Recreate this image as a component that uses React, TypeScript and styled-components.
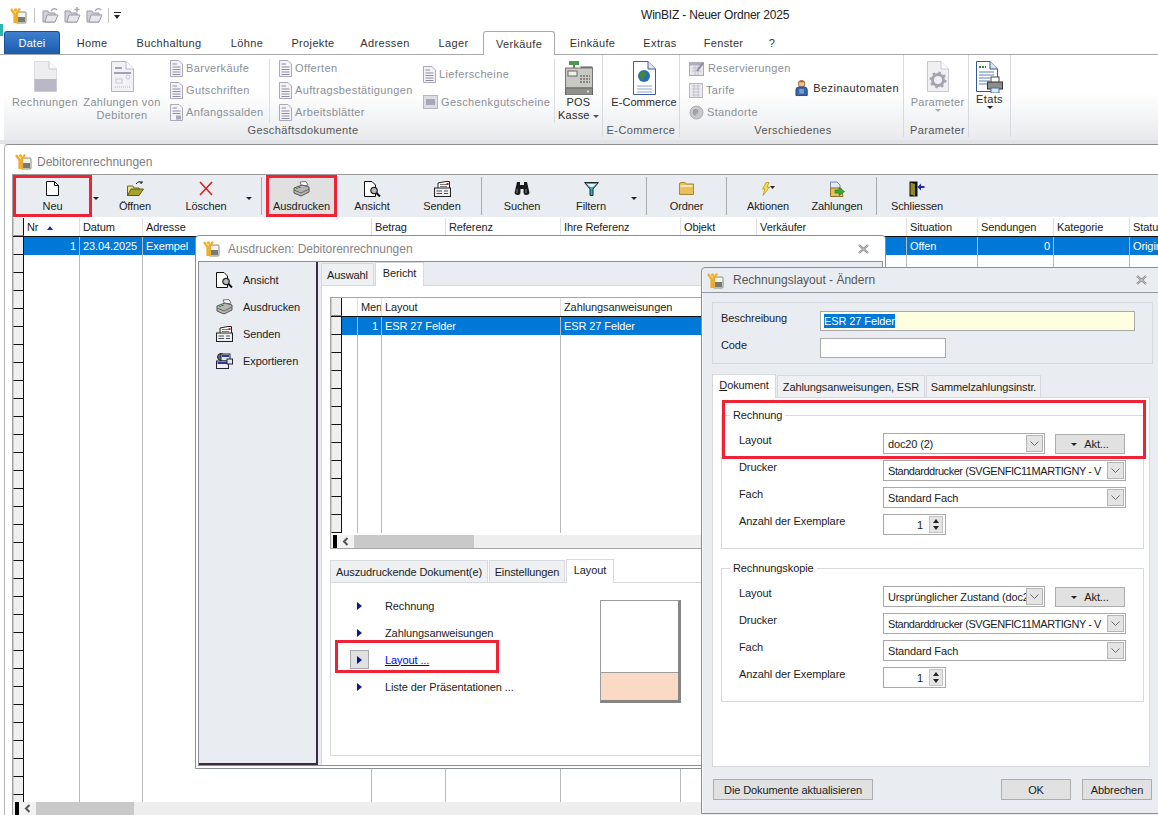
import React, {FC} from "react";
import styled, {createGlobalStyle} from "styled-components";

const GlobalStyle = createGlobalStyle`
  html, body {
    margin: 0;
    padding: 0;
    overflow: hidden;
    background: white;
  }
  * {
    box-sizing: border-box;
  }
`

/* ---------- icons ---------- */

const Logo: FC = () => (
    <svg width="17" height="17" viewBox="0 0 17 17">
        <rect x="6" y="5" width="10" height="11" rx="1" fill="#f4f4f0" stroke="#8a8a70"/>
        <rect x="7" y="10" width="8" height="5" fill="#77787a"/>
        <path d="M1 2 L4.5 7 L4.5 15 L7 15 L7 6 L10 1.5" fill="none" stroke="#f2ac1e" strokeWidth="2.2"/>
        <circle cx="5.5" cy="3" r="1.8" fill="#f5b52c"/>
    </svg>
);

const QuickFolder: FC<{ plus?: boolean }> = ({plus}) => (
    <svg width="17" height="16" viewBox="0 0 17 16">
        <path d="M1 4 H6 L7 6 H13 V15 H1 Z" fill="#d2d0d8" stroke="#9a98a8"/>
        <path d="M3 15 L5 8 H16 L13 15 Z" fill="#e8e7ec" stroke="#9a98a8"/>
        {plus ? <path d="M13 0 V5 M10.5 2.5 H15.5" stroke="#a8a6b4" strokeWidth="1.5"/>
            : <path d="M9 4 Q12 0 15 3" fill="none" stroke="#a8a6b4" strokeWidth="1.3"/>}
    </svg>
);

const BigPage: FC = () => (
    <svg width="23" height="31" viewBox="0 0 23 31">
        <path d="M0.5 0.5 H15 L22.5 8 V30.5 H0.5 Z" fill="#eeeeef" stroke="#dcdce2"/>
        <path d="M15 0.5 V8 H22.5" fill="#fafafa" stroke="#c8c8d0"/>
        <rect x="0.5" y="18" width="22" height="12.5" fill="#bab8c6"/>
    </svg>
);

const BigSlip: FC = () => (
    <svg width="23" height="31" viewBox="0 0 23 31">
        <path d="M0.5 0.5 H15 L22.5 8 V30.5 H0.5 Z" fill="#f2f1f5" stroke="#b4b2c4"/>
        <path d="M15 0.5 V8 H22.5" fill="#fff" stroke="#b4b2c4"/>
        <path d="M4 7 H11 M3 12 H20" stroke="#a3a1b3" strokeWidth="2"/>
        <rect x="5" y="18" width="6" height="4" fill="none" stroke="#c9c7d4"/>
        <circle cx="17" cy="16" r="2" fill="none" stroke="#c9c7d4"/>
        <path d="M4 26 H19" stroke="#b4b2c4" strokeDasharray="1 1"/>
    </svg>
);

const SmallDoc: FC<{ kind?: string }> = ({kind}) => (
    <svg width="13" height="17" viewBox="0 0 13 17">
        <path d="M0.5 0.5 H9 L12.5 4 V16.5 H0.5 Z" fill="#f3f3f6" stroke="#aaa8ba"/>
        <path d="M2.5 4 H7 M2.5 7 H10.5 M2.5 9.5 H10.5" stroke="#8e8ca0"/>
        {kind === "s" ? <rect x="6" y="11.5" width="5" height="4" fill="#aaa8ba"/> : <path d="M2.5 12 H10.5 M2.5 14.5 H10.5" stroke="#8e8ca0"/>}
    </svg>
);

const VoucherIcon: FC = () => (
    <svg width="15" height="14" viewBox="0 0 15 14">
        <rect x="0.5" y="0.5" width="14" height="13" fill="#dddde4" stroke="#b6b4c4"/>
        <rect x="3" y="4" width="9" height="6" fill="#a8a7b8"/>
    </svg>
);

const CashRegister: FC = () => (
    <svg width="28" height="34" viewBox="0 0 28 34">
        <rect x="4" y="0" width="10" height="4" fill="#4a9a4a"/>
        <rect x="8" y="4" width="2" height="3" fill="#777"/>
        <rect x="16" y="6" width="11" height="5" fill="#4ca84c" stroke="#555"/>
        <rect x="0.5" y="7" width="27" height="20" fill="#c9c9c3" stroke="#777"/>
        <rect x="3" y="10" width="9" height="5" fill="#f0f0ec" stroke="#666"/>
        <path d="M15 15 H25 M15 18 H25 M15 21 H25" stroke="#444" strokeDasharray="2 1"/>
        <rect x="0.5" y="27" width="27" height="7" fill="#8f8f8c" stroke="#666"/>
        <circle cx="23" cy="30.5" r="1" fill="#eee"/>
    </svg>
);

const GlobeDoc: FC = () => (
    <svg width="23" height="34" viewBox="0 0 23 34">
        <path d="M0.5 0.5 H15 L22.5 8 V33.5 H0.5 Z" fill="#fff" stroke="#3d5f9e"/>
        <path d="M15 0.5 V8 H22.5" fill="#dfe8f4" stroke="#3d5f9e"/>
        <circle cx="11" cy="15" r="6" fill="#2a6cb8"/>
        <path d="M7 12 Q10 9 13 12 Q14 15 11 16 Q11 20 9 19 Q6 16 7 12 Z" fill="#3e8a3a"/>
        <path d="M4 25 H19 M4 28 H19 M4 31 H19" stroke="#8ea4c9"/>
    </svg>
);

const ReservIcon: FC = () => (
    <svg width="16" height="16" viewBox="0 0 16 16">
        <rect x="0.5" y="2.5" width="14" height="13" fill="#e8e8ec" stroke="#aaa8b8"/>
        <rect x="0.5" y="2.5" width="14" height="3" fill="#b0aebc"/>
        <path d="M3 8 H12 M3 11 H12 M6 6 V15 M9 6 V15" stroke="#c0bece"/>
        <path d="M8 11 L14 3" stroke="#8e8c9c" strokeWidth="2"/>
    </svg>
);

const TarifIcon: FC = () => (
    <svg width="14" height="15" viewBox="0 0 14 15">
        <rect x="0.5" y="0.5" width="13" height="14" fill="#ececf0" stroke="#b8b6c4"/>
        <path d="M3 3 H11 M3 6 H11 M3 9 H11 M3 12 H11 M5 1 V14 M9 1 V14" stroke="#c2c0ce"/>
    </svg>
);

const GreyGlobe: FC = () => (
    <svg width="15" height="15" viewBox="0 0 15 15">
        <circle cx="7.5" cy="7.5" r="6.5" fill="#c8c8cc" stroke="#b0b0b6"/>
        <path d="M4 5 Q7 3 9 5 Q10 8 7 9 Q6 12 5 10 Q3 8 4 5Z" fill="#a0a0a8"/>
    </svg>
);

const PumpMan: FC = () => (
    <svg width="14" height="18" viewBox="0 0 14 18">
        <circle cx="7" cy="4.5" r="3.5" fill="#f0c090" stroke="#a06830"/>
        <path d="M3.5 3 Q7 -1 10.5 3 Z" fill="#a86420"/>
        <path d="M1 17 V11 Q1 8 4 8 H10 Q13 8 13 11 V17 Z" fill="#3a62a8" stroke="#2a4880"/>
        <rect x="4.5" y="10" width="5" height="5" fill="#7a9ad0"/>
    </svg>
);

const GearDoc: FC = () => (
    <svg width="22" height="31" viewBox="0 0 22 31">
        <path d="M0.5 0.5 H14 L21.5 8 V30.5 H0.5 Z" fill="#f0f0f3" stroke="#c8c8d2"/>
        <path d="M14 0.5 V8 H21.5" fill="#fff" stroke="#c8c8d2"/>
        <circle cx="11" cy="19" r="5.5" fill="none" stroke="#a4a3b0" strokeWidth="3"/>
        <circle cx="11" cy="19" r="7.5" fill="none" stroke="#a4a3b0" strokeWidth="2" strokeDasharray="2.5 3.4"/>
    </svg>
);

const EtatsIcon: FC = () => (
    <svg width="27" height="32" viewBox="0 0 27 32">
        <path d="M0.5 0.5 H14 L21.5 8 V30.5 H0.5 Z" fill="#fff" stroke="#345a94"/>
        <path d="M14 0.5 V8 H21.5" fill="#d8e4f2" stroke="#345a94"/>
        <path d="M3 6 H10" stroke="#2b8a3a" strokeWidth="2" strokeDasharray="2 1"/>
        <path d="M3 11 H18 M3 14 H18 M3 17 H14 M3 20 H14 M3 23 H14" stroke="#5c7fb4"/>
        <rect x="15" y="16" width="8" height="6" fill="#fff" stroke="#444"/>
        <rect x="11.5" y="21" width="15" height="7" fill="#8d8d8d" stroke="#333"/>
        <rect x="15" y="27" width="8" height="5" fill="#dfeaf6" stroke="#3c6ea8"/>
    </svg>
);

const NewDoc: FC = () => (
    <svg width="13" height="15" viewBox="0 0 13 15">
        <path d="M0.5 0.5 H8.5 L12.5 4.5 V14.5 H0.5 Z" fill="#fff" stroke="#111"/>
        <path d="M8.5 0.5 V4.5 H12.5" fill="none" stroke="#111"/>
    </svg>
);

const OpenFolder: FC = () => (
    <svg width="17" height="15" viewBox="0 0 17 15">
        <path d="M9 3 Q12 -1 15 2 M15 2 L15 0 M15 2 L13 2" fill="none" stroke="#111"/>
        <path d="M0.5 5 H6 L7 7 H12 V14.5 H0.5 Z" fill="#efe28a" stroke="#6a6420"/>
        <path d="M0.5 14.5 L4 8 H16.5 L12 14.5 Z" fill="#a9a02e" stroke="#5c5618"/>
    </svg>
);

const RedCross: FC = () => (
    <svg width="14" height="15" viewBox="0 0 14 15">
        <path d="M1 1 L13 14 M13 1 L1 14" stroke="#d8201c" strokeWidth="1.6"/>
    </svg>
);

const PrinterIcon: FC = () => (
    <svg width="17" height="16" viewBox="0 0 17 16">
        <path d="M7 1 L13 0.5 L15 4 L9 6 Z" fill="#fafafa" stroke="#777"/>
        <path d="M1 7 L9 4 L16 6 V11 L8 15 L1 12 Z" fill="#b5b5b5" stroke="#555"/>
        <path d="M1 9 L8 12 L16 8" fill="none" stroke="#666"/>
        <rect x="3" y="7" width="2" height="1" fill="#29a329"/>
        <rect x="5.5" y="6" width="2" height="1" fill="#d02020"/>
    </svg>
);

const PreviewIcon: FC = () => (
    <svg width="17" height="16" viewBox="0 0 17 16">
        <path d="M0.5 0.5 H8 L11.5 4 V15.5 H0.5 Z" fill="#fff" stroke="#111"/>
        <circle cx="10" cy="9.5" r="3.2" fill="#bcbcbc" stroke="#222" strokeWidth="1.2"/>
        <path d="M12.5 12 L16 15.5" stroke="#111" strokeWidth="2"/>
    </svg>
);

const SendIcon: FC = () => (
    <svg width="17" height="16" viewBox="0 0 17 16">
        <path d="M4 7 V2 L12 0.5 H15.5 V8" fill="#fff" stroke="#222"/>
        <path d="M6 3.5 H13 M6 5.5 H13" stroke="#777"/>
        <rect x="12.5" y="2" width="2" height="2" fill="#c02020"/>
        <rect x="0.5" y="7" width="16" height="8.5" fill="#eee" stroke="#222"/>
        <path d="M2.5 10 H8 M2.5 12.5 H8 M10 10 H14 M10 12.5 H14" stroke="#456" strokeWidth="1.2"/>
    </svg>
);

const ExportIcon: FC = () => (
    <svg width="17" height="16" viewBox="0 0 17 16">
        <circle cx="5" cy="4" r="3.5" fill="#667" stroke="#222"/>
        <rect x="5" y="1" width="9" height="7" fill="#dfe6f4" stroke="#223"/>
        <rect x="6" y="2" width="7" height="2" fill="#2c3c9c"/>
        <rect x="0.5" y="8" width="12" height="7.5" fill="#eef" stroke="#223"/>
        <rect x="1.5" y="9" width="10" height="2" fill="#2c3c9c"/>
        <rect x="11" y="6" width="5.5" height="5" fill="#dfe6f4" stroke="#223"/>
    </svg>
);

const Binoculars: FC = () => (
    <svg width="16" height="15" viewBox="0 0 16 15">
        <path d="M3 1 H6 V4 H10 V1 H13 L15.5 12 Q15 14 12 14 Q9.5 14 9.5 11 V8 H6.5 V11 Q6.5 14 4 14 Q1 14 0.5 12 Z" fill="#1a1a1a"/>
        <path d="M3 8 V12 M12 8 V12" stroke="#888"/>
    </svg>
);

const Funnel: FC = () => (
    <svg width="15" height="14" viewBox="0 0 15 14">
        <path d="M0.5 0.5 H14.5 L9 7 V13.5 H6 V7 Z" fill="#3ea8a8" stroke="#1c2c34"/>
        <path d="M3 2 H12 L9 5 H6 Z" fill="#e9f6f6"/>
    </svg>
);

const YellowFolder: FC = () => (
    <svg width="15" height="13" viewBox="0 0 15 13">
        <path d="M0.5 2 Q0.5 0.5 2 0.5 H6 L7 2 H14.5 V12.5 H0.5 Z" fill="#e9bf5e" stroke="#a68a3c"/>
        <rect x="1.5" y="3" width="12" height="2" fill="#f7e4ae"/>
    </svg>
);

const Lightning: FC = () => (
    <svg width="16" height="14" viewBox="0 0 16 14">
        <path d="M6 0.5 H9 L7 5 H9.5 L3 13.5 L5 7 H2.5 Z" fill="#f4e04c" stroke="#a88c18" strokeWidth="0.7"/>
        <path d="M10 4 H15 L12.5 7 Z" fill="#222"/>
    </svg>
);

const PayIcon: FC = () => (
    <svg width="15" height="16" viewBox="0 0 15 16">
        <path d="M0.5 1 H7 L10 4 V14.5 H0.5 Z" fill="#dfe8f6" stroke="#7a8ca8"/>
        <path d="M0.5 7 H11 L13 15.5 H0.5 Z" fill="#e9c254" stroke="#8c7228"/>
        <path d="M5 9 H9 V6.5 L14.5 10.5 L9 14.5 V12 H5 Z" fill="#38a838" stroke="#1e6e1e" strokeWidth="0.6"/>
    </svg>
);

const DoorIcon: FC = () => (
    <svg width="16" height="16" viewBox="0 0 16 16">
        <rect x="0.5" y="0.5" width="8" height="15" fill="#111"/>
        <path d="M1.5 1.5 L6 3 V15 L1.5 13.5 Z" fill="#8f8a26"/>
        <path d="M15.5 5 H12 V2.5 L8.5 6 L12 9.5 V7 H15.5 Z" fill="#1c2ea0"/>
    </svg>
);

const Chevron: FC = () => (
    <svg width="9" height="5" viewBox="0 0 9 5">
        <path d="M0.5 0.5 L4.5 4.5 L8.5 0.5" fill="none" stroke="#6a6a6a"/>
    </svg>
);

const ScrollLeft: FC = () => (
    <svg width="7" height="9" viewBox="0 0 7 9">
        <path d="M5.5 1 L2 4.5 L5.5 8" fill="none" stroke="#555" strokeWidth="2"/>
    </svg>
);

const CloseX: FC = () => (
    <svg width="11" height="10" viewBox="0 0 11 10">
        <path d="M1 1 L10 9 M10 1 L1 9" stroke="#7a7a7a" strokeWidth="2.2"/>
        <path d="M1 1 L10 9 M10 1 L1 9" stroke="#f2f2f2" strokeWidth="0.7"/>
    </svg>
);

/* ---------- frame ---------- */

const Page = styled.div`
  position: relative;
  width: 1158px;
  height: 815px;
  overflow: hidden;
  background: white;
  display: flex;
  flex-direction: column;
  font-family: "Liberation Sans", Arial, sans-serif;
  font-size: 11px;
  letter-spacing: -0.1px;
  color: #1c1c1c;
`

const EdgeMark = styled.div`
  position: absolute;
  left: 0;
  top: 24px;
  width: 3px;
  height: 12px;
  background: #2fb5b0;
`

const TopBar = styled.div`
  height: 30px;
  display: flex;
  align-items: center;
  flex-shrink: 0;
`

const QuickBar = styled.div`
  width: 641px;
  padding-left: 10px;
  display: flex;
  align-items: center;
  gap: 5px;
`

const QuickSep = styled.span<{ $gap: number }>`
  width: 1px;
  height: 15px;
  background: #c4c4c4;
  margin: 0 ${p => p.$gap}px;
`

const QuickDrop = styled.span`
  width: 7px;
  height: 7px;
  border-top: 1px solid #222;
  position: relative;
  &::after {
    content: "";
    position: absolute;
    left: 0;
    top: 2px;
    border: 3.5px solid transparent;
    border-top: 4px solid #222;
    border-bottom: none;
  }
`

const AppTitle = styled.div`
  font-size: 12px;
  letter-spacing: -0.2px;
  color: #222;
`

const TabRow = styled.div`
  height: 25px;
  padding: 1px 0 0 4px;
  display: flex;
  align-items: stretch;
  border-bottom: 1px solid #a9a9a9;
  flex-shrink: 0;
`

const FileTab = styled.div`
  width: 56px;
  height: 23px;
  background: linear-gradient(#3f7fce, #1c5cb0);
  border: 1px solid #1b4f96;
  border-bottom: none;
  border-radius: 3px 3px 0 0;
  color: white;
  display: flex;
  align-items: center;
  justify-content: center;
  letter-spacing: 0.3px;
`

const RibbonTab = styled.div<{ $w: number; $active?: boolean }>`
  width: ${p => p.$w}px;
  height: 24px;
  display: flex;
  align-items: center;
  justify-content: center;
  letter-spacing: 0.35px;
  color: #333;
  margin-bottom: -1px;
  ${p => p.$active && `
    background: white;
    border: 1px solid #a9a9a9;
    border-bottom: none;
    border-radius: 3px 3px 0 0;
  `}
`

const Ribbon = styled.div`
  height: 85px;
  margin-left: 4px;
  display: flex;
  background: linear-gradient(#ffffff 45%, #e8eaed);
  flex-shrink: 0;
`

const RibbonGroup = styled.div<{ $w: number }>`
  width: ${p => p.$w}px;
  height: 82px;
  border-right: 1px solid #d6d9dd;
  display: flex;
  flex-direction: column;
`

const GroupBody = styled.div`
  height: 70px;
  display: flex;
`

const GroupLabel = styled.div<{ $pl?: number }>`
  height: 14px;
  line-height: 14px;
  padding-left: ${p => p.$pl || 0}px;
  text-align: center;
  color: #555;
  letter-spacing: 0.4px;
`

const BigButton = styled.div<{ $w: number; $muted?: boolean; $ml?: number; $ls?: number }>`
  width: ${p => p.$w}px;
  margin-left: ${p => p.$ml || 0}px;
  padding-top: 6px;
  display: flex;
  flex-direction: column;
  align-items: center;
  flex-shrink: 0;
  color: ${p => p.$muted ? "#8c8f96" : "#2b2b2b"};
  letter-spacing: ${p => p.$ls ?? 0.35}px;
  white-space: nowrap;
  text-align: center;
  line-height: 13px;
`

const BigIcon = styled.div<{ $mb?: number }>`
  height: 30px;
  margin-bottom: ${p => p.$mb ?? 5}px;
  display: flex;
  justify-content: center;
`

const DropMark = styled.span<{ $color?: string }>`
  display: inline-block;
  border: 3px solid transparent;
  border-top: 3px solid ${p => p.$color || "#222"};
  border-bottom: none;
  vertical-align: middle;
`

const SmallColumn = styled.div<{ $w: number; $ml: number; $pt?: number; $gap?: number }>`
  width: ${p => p.$w}px;
  margin-left: ${p => p.$ml}px;
  padding-top: ${p => p.$pt ?? 2}px;
  display: flex;
  flex-direction: column;
  gap: ${p => p.$gap || 0}px;
  flex-shrink: 0;
`

const SmallItem = styled.div<{ $dark?: boolean }>`
  height: 22px;
  display: flex;
  align-items: center;
  gap: ${p => p.$dark ? 5 : 3}px;
  color: ${p => p.$dark ? "#2b2b2b" : "#8c8f96"};
  letter-spacing: ${p => p.$dark ? 0.45 : 0.36}px;
  white-space: nowrap;
`

const RibbonSep = styled.div`
  width: 1px;
  height: 64px;
  margin-top: 4px;
  background: #dcdee2;
  flex-shrink: 0;
`

const RibbonFoot = styled.div`
  height: 4px;
  background: #e2e4e7;
  flex-shrink: 0;
`

const ChildWindow = styled.div`
  flex: 1;
  min-height: 0;
  margin-left: 4px;
  border-left: 1px solid #b4b4b4;
  border-top: 1px solid #8e8e8e;
  border-top-left-radius: 4px;
  display: flex;
  flex-direction: column;
`

const ChildTitle = styled.div`
  height: 29px;
  padding: 4px 0 0 10px;
  display: flex;
  align-items: center;
  gap: 5px;
  color: #7f7f7f;
  font-size: 12px;
  letter-spacing: 0;
  flex-shrink: 0;
`

const ChildBody = styled.div`
  flex: 1;
  min-height: 0;
  margin-left: 7px;
  border-left: 1px solid #a0a0a0;
  border-top: 1px solid #9b9b9b;
  display: flex;
  flex-direction: column;
`

/* ---------- toolbar ---------- */

const Toolbar = styled.div`
  height: 42px;
  background: #e9edf2;
  display: flex;
  flex-shrink: 0;
`

const ToolButton = styled.div<{ $w: number; $marked?: boolean; $pressed?: boolean }>`
  width: ${p => p.$w}px;
  display: flex;
  flex-direction: column;
  align-items: center;
  padding-top: 5px;
  flex-shrink: 0;
  background: ${p => p.$pressed ? "#e0e0e0" : "transparent"};
  ${p => p.$marked && `
    border: 3px solid #ee2436;
    padding-top: 2px;
  `}
`

const ToolIcon = styled.div`
  height: 17px;
  display: flex;
  align-items: center;
  margin-bottom: 3px;
`

const ToolArrow = styled.div<{ $w: number }>`
  width: ${p => p.$w}px;
  padding-top: 22px;
  display: flex;
  justify-content: center;
  flex-shrink: 0;
`

const ToolSep = styled.div<{ $l: number; $r: number }>`
  width: 1px;
  height: 38px;
  margin: 2px ${p => p.$r}px 0 ${p => p.$l}px;
  background: #a8aaad;
  flex-shrink: 0;
`

/* ---------- grids ---------- */

const GridWrap = styled.div`
  flex: 1;
  min-height: 0;
  padding-top: 1px;
  display: flex;
  flex-direction: column;
  background: white;
  overflow: hidden;
`

const GridRows = styled.div`
  flex: 1;
  min-height: 0;
  overflow: hidden;
`

const HeaderRow = styled.div`
  height: 19px;
  display: flex;
  border-bottom: 1px solid #111;
  flex-shrink: 0;
`

const Row = styled.div<{ $selected?: boolean }>`
  height: 18px;
  display: flex;
  color: ${p => p.$selected ? "white" : "inherit"};
`

const RowHead = styled.div<{ $top?: boolean }>`
  width: 11px;
  flex-shrink: 0;
  background: #efefef;
  border-right: 1px solid #111;
  border-bottom: 1px solid ${p => p.$top ? "#888" : "#111"};
  border-left: 1px solid #ccc;
`

const HeadCell = styled.div<{ $w: number }>`
  width: ${p => p.$w}px;
  flex-shrink: 0;
  padding-left: 3px;
  line-height: 18px;
  border-right: 1px solid #dfdfdf;
  white-space: nowrap;
  overflow: hidden;
`

const Cell = styled.div<{ $w: number; $selected?: boolean; $right?: boolean }>`
  width: ${p => p.$w}px;
  flex-shrink: 0;
  padding: 0 3px;
  line-height: 18px;
  border-right: 1px solid #b9b9b9;
  white-space: nowrap;
  overflow: hidden;
  text-align: ${p => p.$right ? "right" : "left"};
  background: ${p => p.$selected ? "#0078d7" : "transparent"};
`

const SortMark = styled.span`
  display: inline-block;
  margin-left: 9px;
  vertical-align: middle;
  border: 3px solid transparent;
  border-bottom: 4px solid #1c2e98;
  border-top: none;
`

const Scrollbar = styled.div`
  height: 13px;
  display: flex;
  background: #eeeeee;
  flex-shrink: 0;
`

const ScrollStub = styled.div`
  width: 4px;
  margin-left: 2px;
  background: #000;
`

const ScrollButton = styled.div`
  width: 17px;
  display: flex;
  align-items: center;
  justify-content: center;
  background: #f2f2f2;
`

const ScrollThumb = styled.div<{ $w: number }>`
  width: ${p => p.$w}px;
  background: #c9c9c9;
`

/* ---------- print dialog ---------- */

const PrintDialog = styled.div`
  position: absolute;
  left: 195px;
  top: 235px;
  width: 691px;
  height: 534px;
  background: white;
  border: 1px solid #8a8f96;
  border-radius: 4px 4px 0 0;
  padding: 0 2px 2px;
  display: flex;
  flex-direction: column;
`

const DialogTitle = styled.div`
  height: 25px;
  padding-left: 5px;
  display: flex;
  align-items: center;
  gap: 8px;
  color: #868686;
  font-size: 12px;
  letter-spacing: -0.03px;
  flex-shrink: 0;
`

const TitleClose = styled.span<{ $r: number }>`
  margin-left: auto;
  margin-right: ${p => p.$r}px;
  display: flex;
`

const PrintBody = styled.div`
  flex: 1;
  min-height: 0;
  display: flex;
  border: 1px solid #8a8f96;
  border-bottom-width: 1px;
  background: #e9edf2;
`

const SideMenu = styled.div`
  width: 119px;
  flex-shrink: 0;
  padding: 4px 0 0 17px;
  border-right: 2px solid #3b2a46;
  border-bottom: 2px solid #3b2a46;
  display: flex;
  flex-direction: column;
`

const SideItem = styled.div`
  height: 27px;
  display: flex;
  align-items: center;
  gap: 10px;
`

const PrintContent = styled.div`
  flex: 1;
  min-width: 0;
  padding-left: 3px;
  display: flex;
  flex-direction: column;
`

const TabStrip = styled.div`
  display: flex;
  align-items: flex-end;
  flex-shrink: 0;
  position: relative;
`

const TabItem = styled.div<{ $w: number; $active?: boolean }>`
  width: ${p => p.$w}px;
  height: ${p => p.$active ? 24 : 22}px;
  display: flex;
  align-items: center;
  justify-content: center;
  background: ${p => p.$active ? "white" : "#eef0f2"};
  border: 1px solid #d6d9dd;
  border-bottom: none;
  margin-right: 1px;
  margin-bottom: ${p => p.$active ? -1 : 0}px;
  padding-bottom: ${p => p.$active ? 3 : 0}px;
  z-index: ${p => p.$active ? 1 : 0};
  flex-shrink: 0;
`

const ReportPanel = styled.div`
  flex: 1;
  min-height: 0;
  background: white;
  border-top: 1px solid #d6d9dd;
  border-left: 1px solid #d6d9dd;
  padding: 11px 0 9px 8px;
  display: flex;
  flex-direction: column;
`

const ReportGrid = styled.div`
  height: 252px;
  flex-shrink: 0;
  border: 1px solid #a6a6a6;
  display: flex;
  flex-direction: column;
  overflow: hidden;
`

const LowerTabs = styled(TabStrip)`
  margin-top: 10px;
`

const LayoutPanel = styled.div`
  flex: 1;
  min-height: 0;
  border: 1px solid #d6d9dd;
  position: relative;
  padding: 9px 0 0 0;
  display: flex;
`

const ActionList = styled.div`
  width: 269px;
  flex-shrink: 0;
`

const ActionRow = styled.div`
  position: relative;
  height: 27px;
  display: flex;
  align-items: center;
  padding-left: 19px;
`

const ArrowCell = styled.div<{ $active?: boolean }>`
  width: 19px;
  height: 19px;
  display: flex;
  align-items: center;
  justify-content: center;
  margin-right: 16px;
  ${p => p.$active && `
    background: #e1e1e1;
    border: 1px solid #a8a8a8;
  `}
  &::after {
    content: "";
    border: 4px solid transparent;
    border-left: 5px solid #0a1a8a;
    border-right: none;
  }
`

const ActionLink = styled.span`
  color: #0000ee;
  text-decoration: underline;
`

const MarkBox = styled.div`
  position: absolute;
  border: 3px solid #ee2436;
  pointer-events: none;
`

const ActionMark = styled(MarkBox)`
  left: 4px;
  top: -6px;
  width: 164px;
  height: 33px;
`

const Preview = styled.div`
  width: 81px;
  height: 103px;
  margin-top: 8px;
  border-top: 1px solid #9c9c9c;
  border-left: 1px solid #9c9c9c;
  border-right: 3px solid #858585;
  border-bottom: 3px solid #858585;
  display: flex;
  flex-direction: column;
`

const PreviewBlank = styled.div`
  flex: 1;
  border-bottom: 1px solid #9c9c9c;
`

const PreviewFooter = styled.div`
  height: 27px;
  background: #fbd9c4;
`

/* ---------- layout dialog ---------- */

const LayoutDialog = styled.div`
  position: absolute;
  left: 701px;
  top: 267px;
  width: 470px;
  height: 547px;
  background: #e9edf2;
  border: 1px solid #8a8f96;
  border-radius: 4px 4px 0 0;
  box-shadow: inset 1px 0 0 #f7f7f7;
  display: flex;
  flex-direction: column;
`

const LayoutTitle = styled(DialogTitle)`
  color: #555;
  letter-spacing: 0;
  gap: 9px;
  border-bottom: 1px solid #93979d;
`

const LayoutBody = styled.div`
  padding: 9px 0 0 10px;
  width: 451px;
  display: flex;
  flex-direction: column;
`

const TopGroup = styled.div`
  height: 62px;
  width: 441px;
  padding: 8px;
  border: 1px solid #d5d9de;
  display: flex;
  flex-direction: column;
  gap: 7px;
  flex-shrink: 0;
`

const FieldRow = styled.div`
  display: flex;
  align-items: flex-start;
  line-height: 14px;
`

const TopLabel = styled.div`
  width: 99px;
  flex-shrink: 0;
`

const DescInput = styled.div`
  width: 315px;
  height: 20px;
  padding: 2px 3px;
  background: #ffffe1;
  border: 1px solid #a9a9a9;
  display: flex;
  align-items: center;
`

const Selected = styled.span`
  background: #0078d7;
  color: white;
  line-height: 14px;
`

const CodeInput = styled.div`
  width: 126px;
  height: 20px;
  background: white;
  border: 1px solid #a9a9a9;
`

const DocTabs = styled(TabStrip)`
  margin-top: 10px;
`

const DocPanel = styled.div`
  position: relative;
  width: 438px;
  height: 370px;
  background: white;
  border: 1px solid #d6d9dd;
  padding: 10px 5px 0 8px;
  flex-shrink: 0;
`

const PanelMark = styled(MarkBox)`
  left: 9px;
  top: 2px;
  width: 424px;
  height: 59px;
`

const FieldGroup = styled.fieldset`
  margin: 0 0 12px;
  padding: 11px 0 13px 17px;
  border: 1px solid #d6d9dd;
  min-width: 0;
`

const GroupLegend = styled.legend`
  margin-left: -9px;
  padding: 0 3px;
  line-height: 14px;
`

const FormRows = styled.div`
  display: flex;
  flex-direction: column;
  gap: 6px;
`

const FormRow = styled(FieldRow)`
  height: 21px;
`

const FormLabel = styled.div`
  width: 144px;
  flex-shrink: 0;
`

const Combo = styled.div<{ $w: number }>`
  width: ${p => p.$w}px;
  height: 21px;
  padding-left: 4px;
  background: white;
  border: 1px solid #a9a9a9;
  display: flex;
  align-items: center;
  justify-content: space-between;
  flex-shrink: 0;
`

const ComboText = styled.span<{ $tight?: boolean }>`
  flex: 1;
  min-width: 0;
  white-space: nowrap;
  overflow: hidden;
  letter-spacing: ${p => p.$tight ? -0.45 : -0.15}px;
`

const ComboButton = styled.span`
  width: 17px;
  height: 17px;
  margin-right: 1px;
  background: #e4e4e4;
  border: 1px solid #b5b5b5;
  display: flex;
  align-items: center;
  justify-content: center;
  flex-shrink: 0;
`

const AktButton = styled.div`
  width: 70px;
  height: 20px;
  margin: 1px 0 0 10px;
  background: #e1e1e1;
  border: 1px solid #adadad;
  display: flex;
  align-items: center;
  justify-content: center;
  gap: 7px;
  flex-shrink: 0;
`

const Spinner = styled.div`
  width: 63px;
  height: 21px;
  background: white;
  border: 1px solid #a9a9a9;
  display: flex;
  align-items: center;
  justify-content: flex-end;
  gap: 6px;
  padding-right: 2px;
`

const SpinButtons = styled.div`
  width: 14px;
  height: 17px;
  background: #e4e4e4;
  border: 1px solid #c4c4c4;
  display: flex;
  flex-direction: column;
  align-items: center;
  justify-content: space-around;
`

const SpinUp = styled.span`
  border: 3px solid transparent;
  border-bottom: 4px solid #222;
  border-top: none;
`

const SpinDown = styled.span`
  border: 3px solid transparent;
  border-top: 4px solid #222;
  border-bottom: none;
`

const ButtonBar = styled.div`
  display: flex;
  margin-top: 12px;
  padding-left: 1px;
`

const DialogButton = styled.div<{ $w: number; $ml?: number }>`
  width: ${p => p.$w}px;
  height: 21px;
  margin-left: ${p => p.$ml || 0}px;
  background: #e1e1e1;
  border: 1px solid #adadad;
  display: flex;
  align-items: center;
  justify-content: center;
`

/* ---------- data ---------- */

const MAIN_COLUMNS: [string, number][] = [
    ["Nr", 56], ["Datum", 63], ["Adresse", 229], ["Betrag", 74], ["Referenz", 115], ["Ihre Referenz", 120],
    ["Objekt", 76], ["Verkäufer", 150], ["Situation", 71], ["Sendungen", 76], ["Kategorie", 76], ["Status", 60],
];
const MAIN_VALUES = ["1", "23.04.2025", "Exempel", "", "", "", "", "", "Offen", "0", "", "Original"];
const RIGHT_ALIGNED = [0, 9];

const REPORT_COLUMNS: [string, number][] = [["", 16], ["Men", 24], ["Layout", 179], ["Zahlungsanweisungen", 300]];
const REPORT_VALUES = ["", "1", "ESR 27 Felder", "ESR 27 Felder"];

const MainGrid: FC = () => (
    <GridWrap>
        <HeaderRow>
            <RowHead $top/>
            {MAIN_COLUMNS.map(([title, w]) => (
                <HeadCell key={title} $w={w}>{title}{title === "Nr" && <SortMark/>}</HeadCell>
            ))}
        </HeaderRow>
        <GridRows>
            {Array.from({length: 32}, (_, row) => (
                <Row key={row} $selected={row === 0}>
                    <RowHead/>
                    {MAIN_COLUMNS.map(([title, w], col) => (
                        <Cell key={title} $w={w} $selected={row === 0} $right={RIGHT_ALIGNED.includes(col)}>
                            {row === 0 ? MAIN_VALUES[col] : ""}
                        </Cell>
                    ))}
                </Row>
            ))}
        </GridRows>
        <Scrollbar>
            <ScrollStub/>
            <ScrollButton><ScrollLeft/></ScrollButton>
            <ScrollThumb $w={98}/>
        </Scrollbar>
    </GridWrap>
);

const ReportTable: FC = () => (
    <ReportGrid>
        <HeaderRow>
            <RowHead $top/>
            {REPORT_COLUMNS.map(([title, w]) => <HeadCell key={title} $w={w}>{title}</HeadCell>)}
        </HeaderRow>
        <GridRows>
            {Array.from({length: 12}, (_, row) => (
                <Row key={row} $selected={row === 0}>
                    <RowHead/>
                    {REPORT_COLUMNS.map(([title, w], col) => (
                        <Cell key={title} $w={w} $selected={row === 0} $right={col === 1}>
                            {row === 0 ? REPORT_VALUES[col] : ""}
                        </Cell>
                    ))}
                </Row>
            ))}
        </GridRows>
        <Scrollbar>
            <ScrollStub/>
            <ScrollButton><ScrollLeft/></ScrollButton>
            <ScrollThumb $w={120}/>
        </Scrollbar>
    </ReportGrid>
);

const SelectField: FC<{ label: string, value: string, w: number, akt?: boolean, tight?: boolean }> = ({label, value, w, akt, tight}) => (
    <FormRow>
        <FormLabel>{label}</FormLabel>
        <Combo $w={w}>
            <ComboText $tight={tight}>{value}</ComboText>
            <ComboButton><Chevron/></ComboButton>
        </Combo>
        {akt && <AktButton><DropMark/>Akt...</AktButton>}
    </FormRow>
);

const PrintFields: FC<{ title: string, layout: string }> = ({title, layout}) => (
    <FieldGroup>
        <GroupLegend>{title}</GroupLegend>
        <FormRows>
            <SelectField label="Layout" value={layout} w={162} akt/>
            <SelectField label="Drucker" value="Standarddrucker (SVGENFIC11MARTIGNY - V" w={243} tight/>
            <SelectField label="Fach" value="Standard Fach" w={243}/>
            <FormRow>
                <FormLabel>Anzahl der Exemplare</FormLabel>
                <Spinner>1<SpinButtons><SpinUp/><SpinDown/></SpinButtons></Spinner>
            </FormRow>
        </FormRows>
    </FieldGroup>
);

const App: FC = () => {
    return <Page>
        <GlobalStyle/>
        <EdgeMark/>
        <TopBar>
            <QuickBar>
                <Logo/>
                <QuickSep $gap={2}/>
                <QuickFolder/>
                <QuickFolder plus/>
                <QuickFolder/>
                <QuickSep $gap={0}/>
                <QuickDrop/>
            </QuickBar>
            <AppTitle>WinBIZ - Neuer Ordner 2025</AppTitle>
        </TopBar>
        <TabRow>
            <FileTab>Datei</FileTab>
            <RibbonTab $w={64}>Home</RibbonTab>
            <RibbonTab $w={90}>Buchhaltung</RibbonTab>
            <RibbonTab $w={66}>Löhne</RibbonTab>
            <RibbonTab $w={66}>Projekte</RibbonTab>
            <RibbonTab $w={78}>Adressen</RibbonTab>
            <RibbonTab $w={59}>Lager</RibbonTab>
            <RibbonTab $w={72} $active>Verkäufe</RibbonTab>
            <RibbonTab $w={75}>Einkäufe</RibbonTab>
            <RibbonTab $w={60}>Extras</RibbonTab>
            <RibbonTab $w={67}>Fenster</RibbonTab>
            <RibbonTab $w={30}>?</RibbonTab>
        </TabRow>
        <Ribbon>
            <RibbonGroup $w={599}>
                <GroupBody>
                    <BigButton $w={72} $ml={5} $muted><BigIcon><BigPage/></BigIcon>Rechnungen</BigButton>
                    <BigButton $w={82} $muted><BigIcon><BigSlip/></BigIcon>Zahlungen von<br/>Debitoren</BigButton>
                    <SmallColumn $w={99} $ml={7}>
                        <SmallItem><SmallDoc/>Barverkäufe</SmallItem>
                        <SmallItem><SmallDoc/>Gutschriften</SmallItem>
                        <SmallItem><SmallDoc kind="s"/>Anfangssalden</SmallItem>
                    </SmallColumn>
                    <RibbonSep/>
                    <SmallColumn $w={144} $ml={9}>
                        <SmallItem><SmallDoc/>Offerten</SmallItem>
                        <SmallItem><SmallDoc/>Auftragsbestätigungen</SmallItem>
                        <SmallItem><SmallDoc/>Arbeitsblätter</SmallItem>
                    </SmallColumn>
                    <SmallColumn $w={131} $ml={0} $pt={8} $gap={6}>
                        <SmallItem><SmallDoc/>Lieferscheine</SmallItem>
                        <SmallItem><VoucherIcon/>Geschenkgutscheine</SmallItem>
                    </SmallColumn>
                    <RibbonSep/>
                    <BigButton $w={47} $ls={0.2}><BigIcon><CashRegister/></BigIcon>POS<br/><span>Kasse <DropMark $color="#555"/></span></BigButton>
                </GroupBody>
                <GroupLabel>Geschäftsdokumente</GroupLabel>
            </RibbonGroup>
            <RibbonGroup $w={77}>
                <GroupBody>
                    <BigButton $w={74} $ml={4} $ls={0.05}><BigIcon><GlobeDoc/></BigIcon>E-Commerce</BigButton>
                </GroupBody>
                <GroupLabel>E-Commerce</GroupLabel>
            </RibbonGroup>
            <RibbonGroup $w={224}>
                <GroupBody>
                    <SmallColumn $w={106} $ml={9}>
                        <SmallItem><ReservIcon/>Reservierungen</SmallItem>
                        <SmallItem><TarifIcon/>Tarife</SmallItem>
                        <SmallItem><GreyGlobe/>Standorte</SmallItem>
                    </SmallColumn>
                    <SmallColumn $w={104} $ml={0} $pt={22}>
                        <SmallItem $dark><PumpMan/>Bezinautomaten</SmallItem>
                    </SmallColumn>
                </GroupBody>
                <GroupLabel $pl={3}>Verschiedenes</GroupLabel>
            </RibbonGroup>
            <RibbonGroup $w={65}>
                <GroupBody>
                    <BigButton $w={63} $ml={2} $ls={0.25} $muted><BigIcon><GearDoc/></BigIcon>Parameter<br/><DropMark $color="#aaa"/></BigButton>
                </GroupBody>
                <GroupLabel $pl={3}>Parameter</GroupLabel>
            </RibbonGroup>
            <RibbonGroup $w={42}>
                <GroupBody>
                    <BigButton $w={41}><BigIcon $mb={2}><EtatsIcon/></BigIcon>Etats<br/><DropMark/></BigButton>
                </GroupBody>
            </RibbonGroup>
        </Ribbon>
        <RibbonFoot/>
        <ChildWindow>
            <ChildTitle><Logo/>Debitorenrechnungen</ChildTitle>
            <ChildBody>
                <Toolbar>
                    <ToolButton $w={79} $marked><ToolIcon><NewDoc/></ToolIcon>Neu</ToolButton>
                    <ToolArrow $w={7}><DropMark/></ToolArrow>
                    <ToolButton $w={72}><ToolIcon><OpenFolder/></ToolIcon>Öffnen</ToolButton>
                    <ToolButton $w={70}><ToolIcon><RedCross/></ToolIcon>Löschen</ToolButton>
                    <ToolArrow $w={15}><DropMark/></ToolArrow>
                    <ToolSep $l={5} $r={4}/>
                    <ToolButton $w={71} $marked $pressed><ToolIcon><PrinterIcon/></ToolIcon>Ausdrucken</ToolButton>
                    <ToolButton $w={70}><ToolIcon><PreviewIcon/></ToolIcon>Ansicht</ToolButton>
                    <ToolButton $w={70}><ToolIcon><SendIcon/></ToolIcon>Senden</ToolButton>
                    <ToolSep $l={4} $r={5}/>
                    <ToolButton $w={70}><ToolIcon><Binoculars/></ToolIcon>Suchen</ToolButton>
                    <ToolButton $w={68}><ToolIcon><Funnel/></ToolIcon>Filtern</ToolButton>
                    <ToolArrow $w={17}><DropMark/></ToolArrow>
                    <ToolSep $l={4} $r={5}/>
                    <ToolButton $w={69}><ToolIcon><YellowFolder/></ToolIcon>Ordner</ToolButton>
                    <ToolSep $l={5} $r={6}/>
                    <ToolButton $w={70}><ToolIcon><Lightning/></ToolIcon>Aktionen</ToolButton>
                    <ToolButton $w={68}><ToolIcon><PayIcon/></ToolIcon>Zahlungen</ToolButton>
                    <ToolSep $l={5} $r={5}/>
                    <ToolButton $w={70}><ToolIcon><DoorIcon/></ToolIcon>Schliessen</ToolButton>
                </Toolbar>
                <MainGrid/>
            </ChildBody>
        </ChildWindow>

        <PrintDialog>
            <DialogTitle>
                <Logo/>
                Ausdrucken: Debitorenrechnungen
                <TitleClose $r={14}><CloseX/></TitleClose>
            </DialogTitle>
            <PrintBody>
                <SideMenu>
                    <SideItem><PreviewIcon/>Ansicht</SideItem>
                    <SideItem><PrinterIcon/>Ausdrucken</SideItem>
                    <SideItem><SendIcon/>Senden</SideItem>
                    <SideItem><ExportIcon/>Exportieren</SideItem>
                </SideMenu>
                <PrintContent>
                    <TabStrip>
                        <TabItem $w={53}>Auswahl</TabItem>
                        <TabItem $w={49} $active>Bericht</TabItem>
                    </TabStrip>
                    <ReportPanel>
                        <ReportTable/>
                        <LowerTabs>
                            <TabItem $w={158}>Auszudruckende Dokument(e)</TabItem>
                            <TabItem $w={76}>Einstellungen</TabItem>
                            <TabItem $w={48} $active>Layout</TabItem>
                        </LowerTabs>
                        <LayoutPanel>
                            <ActionList>
                                <ActionRow><ArrowCell/>Rechnung</ActionRow>
                                <ActionRow><ArrowCell/>Zahlungsanweisungen</ActionRow>
                                <ActionRow>
                                    <ArrowCell $active/>
                                    <ActionLink>Layout ...</ActionLink>
                                    <ActionMark/>
                                </ActionRow>
                                <ActionRow><ArrowCell/>Liste der Präsentationen ...</ActionRow>
                            </ActionList>
                            <Preview>
                                <PreviewBlank/>
                                <PreviewFooter/>
                            </Preview>
                        </LayoutPanel>
                    </ReportPanel>
                </PrintContent>
            </PrintBody>
        </PrintDialog>

        <LayoutDialog>
            <LayoutTitle>
                <Logo/>
                Rechnungslayout - Ändern
                <TitleClose $r={23}><CloseX/></TitleClose>
            </LayoutTitle>
            <LayoutBody>
                <TopGroup>
                    <FieldRow>
                        <TopLabel>Beschreibung</TopLabel>
                        <DescInput><Selected>ESR 27 Felder</Selected></DescInput>
                    </FieldRow>
                    <FieldRow>
                        <TopLabel>Code</TopLabel>
                        <CodeInput/>
                    </FieldRow>
                </TopGroup>
                <DocTabs>
                    <TabItem $w={64} $active><span><u>D</u>okument</span></TabItem>
                    <TabItem $w={148}>Zahlungsanweisungen, ESR</TabItem>
                    <TabItem $w={115}>Sammelzahlungsinstr.</TabItem>
                </DocTabs>
                <DocPanel>
                    <PrintFields title="Rechnung" layout="doc20 (2)"/>
                    <PrintFields title="Rechnungskopie" layout="Ursprünglicher Zustand (doc2"/>
                    <PanelMark/>
                </DocPanel>
                <ButtonBar>
                    <DialogButton $w={160}>Die Dokumente aktualisieren</DialogButton>
                    <DialogButton $w={70} $ml={128}>OK</DialogButton>
                    <DialogButton $w={70} $ml={11}>Abbrechen</DialogButton>
                </ButtonBar>
            </LayoutBody>
        </LayoutDialog>
    </Page>
};

export default App;
